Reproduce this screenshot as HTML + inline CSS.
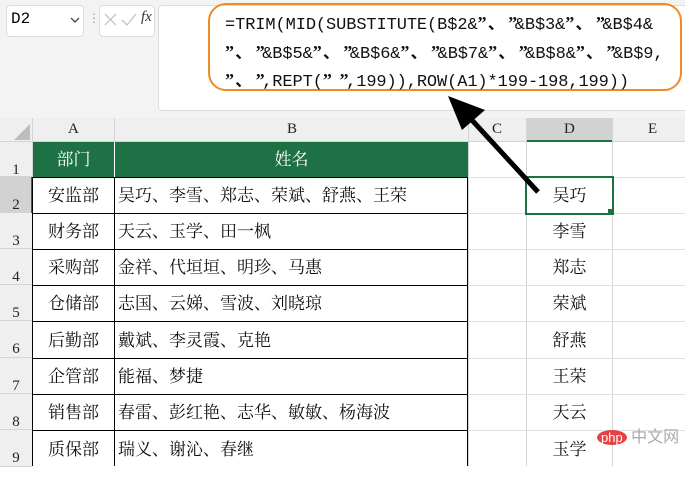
<!DOCTYPE html>
<html><head><meta charset="utf-8"><style>
body{margin:0;width:685px;height:466px;overflow:hidden;background:#fff;font-family:"Liberation Serif","Noto Serif CJK SC",serif;position:relative}
.a{position:absolute}
.cell{position:absolute;font-size:17px;line-height:36px;color:#111;white-space:nowrap}
.rh{position:absolute;left:0;width:32px;background:#efefef;border-bottom:1px solid #d4d4d4;font-size:15px;text-align:center;color:#222}
.f{font-size:17px;line-height:24.5px;font-family:'Liberation Mono','Noto Sans CJK SC',monospace;color:#111;white-space:pre;letter-spacing:-0.1px}
.q{display:inline-block;width:6.6px;overflow:visible;text-align:center;font-family:'Liberation Serif',serif;font-size:18px}
.c{display:inline-block;width:24px;text-align:center;font-family:'Noto Sans CJK SC',sans-serif}
</style></head><body>
<div class="a" style="left:0;top:0;width:685px;height:118px;background:#f3f3f3"></div>
<div class="a" style="left:6px;top:5px;width:76px;height:30px;background:#fff;border:1px solid #ddd;border-radius:4px"></div>
<div class="a" style="left:11px;top:10px;font-size:16px;font-family:'Liberation Mono',monospace">D2</div>
<svg class="a" style="left:70px;top:17px" width="10" height="7"><path d="M1 1 L5 5 L9 1" fill="none" stroke="#444" stroke-width="1.3"/></svg>
<div class="a" style="left:88px;top:11px;font-size:12px;color:#999">⋮</div>
<div class="a" style="left:99px;top:5px;width:54px;height:30px;background:#fff;border:1px solid #ddd;border-radius:4px"></div>
<svg class="a" style="left:103px;top:12px" width="36" height="16"><path d="M2 2 L13 13 M13 2 L2 13" stroke="#c4c4c4" stroke-width="1.3"/><path d="M19 8 L24 13 L33 2" fill="none" stroke="#c4c4c4" stroke-width="1.3"/></svg>
<div class="a" style="left:141px;top:9px;font-size:15px;font-style:italic;color:#333">fx</div>
<div class="a" style="left:158px;top:5px;width:530px;height:104px;background:#fff;border:1px solid #ddd;border-radius:4px"></div>
<div class="a" style="left:208px;top:3px;width:470px;height:84px;border:2px solid #f08a24;border-radius:18px"></div>
<div class="a f" style="left:225px;top:10px">=TRIM(MID(SUBSTITUTE(B$2&amp;<b class="q">”</b><b class="c">、</b><b class="q">”</b>&amp;B$3&amp;<b class="q">”</b><b class="c">、</b><b class="q">”</b>&amp;B$4&amp;
<b class="q">”</b><b class="c">、</b><b class="q">”</b>&amp;B$5&amp;<b class="q">”</b><b class="c">、</b><b class="q">”</b>&amp;B$6&amp;<b class="q">”</b><b class="c">、</b><b class="q">”</b>&amp;B$7&amp;<b class="q">”</b><b class="c">、</b><b class="q">”</b>&amp;B$8&amp;<b class="q">”</b><b class="c">、</b><b class="q">”</b>&amp;B$9,
<b class="q">”</b><b class="c">、</b><b class="q">”</b>,REPT(<b class="q">”</b> <b class="q">”</b>,199)),ROW(A1)*199-198,199))</div>
<div class="a" style="left:0;top:118px;width:685px;height:23px;background:#efefef;border-bottom:1px solid #d4d4d4"></div>
<div class="a" style="left:526px;top:118px;width:86px;height:22px;background:#d2d2d2;border-bottom:2px solid #1e7145"></div>
<svg class="a" style="left:10px;top:122px" width="20" height="18"><polygon points="20,2 20,18 4,18" fill="#bdbdbd"/></svg>
<div class="a" style="left:0;top:118px;font-size:15px;line-height:23px;color:#222">
<span class="a" style="left:68px">A</span><span class="a" style="left:287px">B</span><span class="a" style="left:492px">C</span><span class="a" style="left:564px">D</span><span class="a" style="left:648px">E</span></div>
<div class="a" style="left:114px;top:118px;width:1px;height:23px;background:#d4d4d4"></div>
<div class="a" style="left:468px;top:118px;width:1px;height:348px;background:#d4d4d4"></div>
<div class="a" style="left:526px;top:118px;width:1px;height:348px;background:#d4d4d4"></div>
<div class="a" style="left:612px;top:118px;width:1px;height:348px;background:#d4d4d4"></div>
<div class="a" style="left:32px;top:118px;width:1px;height:348px;background:#d4d4d4"></div>
<div class="rh" style="top:142px;height:34px;line-height:56px">1</div>
<div class="rh" style="top:177px;height:35px;line-height:56px;background:#d2d2d2">2</div>
<div class="rh" style="top:213px;height:35px;line-height:56px">3</div>
<div class="rh" style="top:249px;height:35px;line-height:56px">4</div>
<div class="rh" style="top:285px;height:35px;line-height:56px">5</div>
<div class="rh" style="top:321px;height:36px;line-height:56px">6</div>
<div class="rh" style="top:358px;height:35px;line-height:56px">7</div>
<div class="rh" style="top:394px;height:35px;line-height:56px">8</div>
<div class="rh" style="top:430px;height:36px;line-height:56px">9</div>
<div class="a" style="left:31px;top:177px;width:2px;height:36px;background:#1e7145"></div>
<div class="a" style="left:468px;top:177px;width:217px;height:1px;background:#e0e0e0"></div>
<div class="a" style="left:468px;top:213px;width:217px;height:1px;background:#e0e0e0"></div>
<div class="a" style="left:468px;top:249px;width:217px;height:1px;background:#e0e0e0"></div>
<div class="a" style="left:468px;top:285px;width:217px;height:1px;background:#e0e0e0"></div>
<div class="a" style="left:468px;top:321px;width:217px;height:1px;background:#e0e0e0"></div>
<div class="a" style="left:468px;top:358px;width:217px;height:1px;background:#e0e0e0"></div>
<div class="a" style="left:468px;top:394px;width:217px;height:1px;background:#e0e0e0"></div>
<div class="a" style="left:468px;top:430px;width:217px;height:1px;background:#e0e0e0"></div>
<div class="a" style="left:33px;top:142px;width:435px;height:35px;background:#1e7145"></div>
<div class="a" style="left:114px;top:142px;width:1px;height:35px;background:#fff"></div>
<div class="cell" style="left:33px;top:142px;width:81px;text-align:center;color:#fff">部门</div>
<div class="cell" style="left:115px;top:142px;width:353px;text-align:center;color:#fff">姓名</div>
<div class="a" style="left:32px;top:177px;width:436px;height:289px;border-left:1px solid #000;border-right:1px solid #000;box-sizing:border-box"></div>
<div class="a" style="left:114px;top:177px;width:1px;height:289px;background:#000"></div>
<div class="a" style="left:32px;top:177px;width:436px;height:1px;background:#000"></div>
<div class="a" style="left:32px;top:213px;width:436px;height:1px;background:#000"></div>
<div class="a" style="left:32px;top:249px;width:436px;height:1px;background:#000"></div>
<div class="a" style="left:32px;top:285px;width:436px;height:1px;background:#000"></div>
<div class="a" style="left:32px;top:321px;width:436px;height:1px;background:#000"></div>
<div class="a" style="left:32px;top:358px;width:436px;height:1px;background:#000"></div>
<div class="a" style="left:32px;top:394px;width:436px;height:1px;background:#000"></div>
<div class="a" style="left:32px;top:430px;width:436px;height:1px;background:#000"></div>
<div class="cell" style="left:33px;top:178px;width:81px;text-align:center">安监部</div><div class="cell" style="left:118px;top:178px">吴巧、李雪、郑志、荣斌、舒燕、王荣</div>
<div class="cell" style="left:33px;top:214px;width:81px;text-align:center">财务部</div><div class="cell" style="left:118px;top:214px">天云、玉学、田一枫</div>
<div class="cell" style="left:33px;top:250px;width:81px;text-align:center">采购部</div><div class="cell" style="left:118px;top:250px">金祥、代垣垣、明珍、马惠</div>
<div class="cell" style="left:33px;top:286px;width:81px;text-align:center">仓储部</div><div class="cell" style="left:118px;top:286px">志国、云娣、雪波、刘晓琼</div>
<div class="cell" style="left:33px;top:323px;width:81px;text-align:center">后勤部</div><div class="cell" style="left:118px;top:323px">戴斌、李灵霞、克艳</div>
<div class="cell" style="left:33px;top:359px;width:81px;text-align:center">企管部</div><div class="cell" style="left:118px;top:359px">能福、梦捷</div>
<div class="cell" style="left:33px;top:395px;width:81px;text-align:center">销售部</div><div class="cell" style="left:118px;top:395px">春雷、彭红艳、志华、敏敏、杨海波</div>
<div class="cell" style="left:33px;top:432px;width:81px;text-align:center">质保部</div><div class="cell" style="left:118px;top:432px">瑞义、谢沁、春继</div>
<div class="a" style="left:525px;top:176px;width:85px;height:35px;border:2px solid #1e7145"></div>
<div class="a" style="left:608px;top:209px;width:5px;height:5px;background:#1e7145"></div>
<div class="cell" style="left:527px;top:178px;width:85px;text-align:center">吴巧</div>
<div class="cell" style="left:527px;top:214px;width:85px;text-align:center">李雪</div>
<div class="cell" style="left:527px;top:250px;width:85px;text-align:center">郑志</div>
<div class="cell" style="left:527px;top:286px;width:85px;text-align:center">荣斌</div>
<div class="cell" style="left:527px;top:323px;width:85px;text-align:center">舒燕</div>
<div class="cell" style="left:527px;top:359px;width:85px;text-align:center">王荣</div>
<div class="cell" style="left:527px;top:395px;width:85px;text-align:center">天云</div>
<div class="cell" style="left:527px;top:432px;width:85px;text-align:center">玉学</div>
<svg class="a" style="left:0;top:0" width="685" height="466">
<line x1="538" y1="192" x2="470" y2="118" stroke="#000" stroke-width="5"/>
<polygon points="448,96 485,110 462,130" fill="#000"/>
</svg>
<div class="a" style="left:597px;top:423px;font-size:16px;color:#aaa;font-family:'Liberation Sans','Noto Sans CJK SC',sans-serif"><span style="background:#e64040;color:#fff;border-radius:50%;padding:0 4px;font-size:13px">php</span> 中文网</div>
</body></html>
